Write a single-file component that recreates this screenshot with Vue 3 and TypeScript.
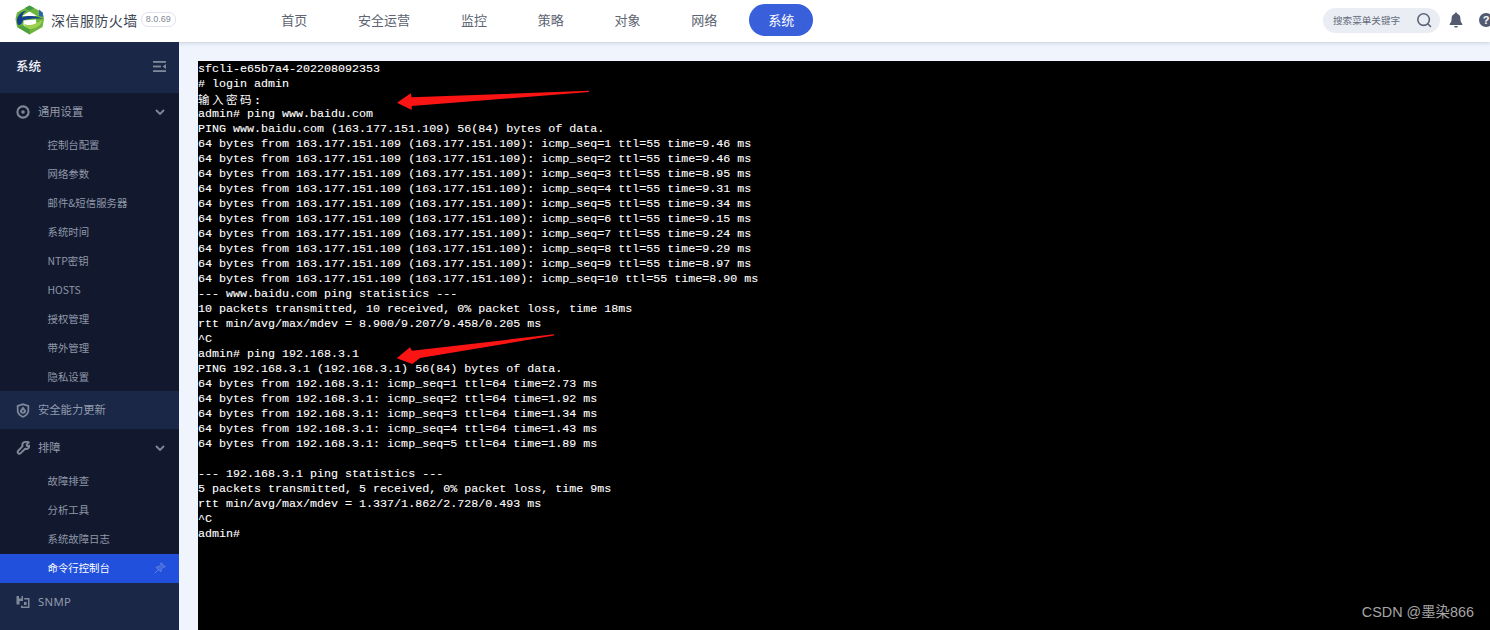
<script setup lang="ts">
const navItems = ['首页', '安全运营', '监控', '策略', '对象', '网络', '系统']
const generalItems = ['控制台配置', '网络参数', '邮件&短信服务器', '系统时间', 'NTP密钥', 'HOSTS', '授权管理', '带外管理', '隐私设置']
const troubleItems = ['故障排查', '分析工具', '系统故障日志']

const pingBaidu = ['9.46', '9.46', '8.95', '9.31', '9.34', '9.15', '9.24', '9.29', '8.97', '8.90'].map(
  (t, i) => `64 bytes from 163.177.151.109 (163.177.151.109): icmp_seq=${i + 1} ttl=55 time=${t} ms`,
)
const pingGateway = ['2.73', '1.92', '1.34', '1.43', '1.89'].map(
  (t, i) => `64 bytes from 192.168.3.1: icmp_seq=${i + 1} ttl=64 time=${t} ms`,
)
const linesAfter = [
  'admin# ping www.baidu.com',
  'PING www.baidu.com (163.177.151.109) 56(84) bytes of data.',
  ...pingBaidu,
  '--- www.baidu.com ping statistics ---',
  '10 packets transmitted, 10 received, 0% packet loss, time 18ms',
  'rtt min/avg/max/mdev = 8.900/9.207/9.458/0.205 ms',
  '^C',
  'admin# ping 192.168.3.1',
  'PING 192.168.3.1 (192.168.3.1) 56(84) bytes of data.',
  ...pingGateway,
  ' ',
  '--- 192.168.3.1 ping statistics ---',
  '5 packets transmitted, 5 received, 0% packet loss, time 9ms',
  'rtt min/avg/max/mdev = 1.337/1.862/2.728/0.493 ms',
  '^C',
  'admin#',
]
</script>

<template>
  <div class="page">
    <header class="topbar">
      <div class="brand">
        <svg class="logo" viewBox="0 0 30 30" width="30" height="30">
          <path d="M14.5 0.5 L27.5 7.5 L29 14 L27.5 22 L14.5 29.5 L2 22 L0.5 14 L2 7.5 Z" fill="#6db53e" />
          <path d="M14.5 0.5 L19 3 L14.5 6 L10 3 Z" fill="#3f9a4a" />
          <path d="M14.5 6.5 L22 11 L7 11 Z" fill="#ffffff" />
          <path d="M3 20 C0 14 4 6.5 12 5.5 C8.5 7.5 7 10 7 12.5 C11 10.5 20 10 28.5 14 C22 13 14 13.5 8 15.5 C7.5 17.5 6 20.5 3 20 Z" fill="#153f8e" />
          <path d="M24 4.5 L27.5 7.5 L28.5 12 L24 11 Z" fill="#2a64ad" />
          <path d="M8.5 15.5 L21 14.5 L21.5 19.5 L14.5 24 L8.5 20 Z" fill="#ffffff" />
          <path d="M9 19 C14 21.5 21 19.5 27.5 14.5 C27 20 21 24 15 24 C12 23.5 10 21.5 9 19 Z" fill="#9ed04f" />
          <path d="M14.5 24 L15 29.5 L2.5 22 L6 20.5 Z" fill="#4fa03f" />
        </svg>
        <span class="brand-name">深信服防火墙</span>
        <span class="version">8.0.69</span>
      </div>
      <nav class="nav">
        <a v-for="item in navItems" :key="item" class="nav-item" :class="{ active: item === '系统' }">{{ item }}</a>
      </nav>
      <div class="tools">
        <div class="search">
          <span class="search-text">搜索菜单关键字</span>
          <svg viewBox="0 0 16 16" width="16" height="16" fill="none" stroke="#5b6478" stroke-width="1.6">
            <circle cx="7.6" cy="7.6" r="5.8" />
            <path d="M12 12 L14.5 14.5" stroke-linecap="round" />
          </svg>
        </div>
        <svg class="bell" viewBox="0 0 14 16" width="14" height="16" fill="#525b70">
          <path d="M7 0.5 C7.8 0.5 8.2 1 8.2 1.8 C10.4 2.4 11.4 4.2 11.4 6.6 C11.4 9.2 12 10.6 13.3 12 L13.3 12.9 L0.7 12.9 L0.7 12 C2 10.6 2.6 9.2 2.6 6.6 C2.6 4.2 3.6 2.4 5.8 1.8 C5.8 1 6.2 0.5 7 0.5 Z" />
          <path d="M5.2 13.9 L8.8 13.9 C8.8 15 8 15.6 7 15.6 C6 15.6 5.2 15 5.2 13.9 Z" />
        </svg>
        <span class="help">?</span>
      </div>
    </header>

    <div class="body">
      <aside class="sidebar">
        <div class="side-head">
          <span>系统</span>
          <svg viewBox="0 0 13 11" width="13" height="11" fill="#7f8899">
            <rect x="0" y="0" width="13" height="1.8" />
            <rect x="0" y="4.6" width="8" height="1.8" />
            <rect x="0" y="9.2" width="13" height="1.8" />
            <path d="M13 3 L13 8 L9.6 5.5 Z" />
          </svg>
        </div>

        <div class="group">
          <div class="group-title">
            <svg class="g-icon" viewBox="0 0 14 14" width="14" height="14" fill="none" stroke="#7f8899">
              <circle cx="7" cy="7" r="5.6" stroke-width="2.1" />
              <circle cx="7" cy="7" r="1.8" fill="#7f8899" stroke="none" />
            </svg>
            <span class="g-label">通用设置</span>
            <svg class="chevron" viewBox="0 0 10 6" width="10" height="6" fill="none" stroke="#7f8899" stroke-width="1.8">
              <path d="M1 1 L5 5 L9 1" />
            </svg>
          </div>
          <a v-for="item in generalItems" :key="item" class="sub-item">{{ item }}</a>
        </div>

        <div class="group-title light">
          <svg class="g-icon" viewBox="0 0 14 15" width="14" height="15" fill="#7f8899">
            <path fill-rule="evenodd" d="M7 0.3 L13.2 2.2 L13.2 7.6 C13.2 11 10.4 13.6 7 14.8 C3.6 13.6 0.8 11 0.8 7.6 L0.8 2.2 Z M7 2.2 L2.5 3.4 L2.5 7.6 C2.5 9.8 4.6 12 7 13 C9.4 12 11.5 9.8 11.5 7.6 L11.5 3.4 Z" />
            <path d="M7 3.6 L10.2 7.8 C10.2 9.8 8.6 10.8 7 10.8 C5.4 10.8 3.8 9.8 3.8 7.8 Z M6.4 7 L6.4 9.2 L7.6 9.2 L7.6 7 Z" fill-rule="evenodd" />
          </svg>
          <span class="g-label">安全能力更新</span>
        </div>

        <div class="group">
          <div class="group-title">
            <svg class="g-icon" viewBox="0 0 14 14" width="14" height="14" fill="none" stroke="#7f8899" stroke-width="1.9">
              <path d="M8.3 1.2 C10 0.6 12 1 12.8 1.4 L10.6 3.7 L11 5 L12.4 5.3 L13.2 4.6 C13.5 6.6 11.8 8.4 9.2 7.8 L4.4 12.4 C3 13.6 0.8 11.6 2 10 L6.6 5.2 C6 3.6 6.8 1.8 8.3 1.2 Z" stroke-linejoin="round" />
            </svg>
            <span class="g-label">排障</span>
            <svg class="chevron" viewBox="0 0 10 6" width="10" height="6" fill="none" stroke="#7f8899" stroke-width="1.8">
              <path d="M1 1 L5 5 L9 1" />
            </svg>
          </div>
          <a v-for="item in troubleItems" :key="item" class="sub-item">{{ item }}</a>
          <a class="sub-item active">
            命令行控制台
            <svg class="pin" viewBox="0 0 12 12" width="12" height="12" fill="none" stroke="#5f80e6" stroke-width="1">
              <path d="M7.2 0.8 L11.2 4.8 L10.3 5.4 L9.4 5 L7.2 7.2 L7.4 9 L6.6 9.8 L2.2 5.4 L3 4.6 L4.8 4.8 L7 2.6 L6.6 1.6 Z" fill="#4168dc" />
              <path d="M4.2 7.8 L0.8 11.2" />
            </svg>
          </a>
        </div>

        <div class="group-title light grow">
          <svg class="g-icon" viewBox="0 0 14 14" width="14" height="14" fill="#7f8899">
            <path d="M0.5 1 H3 V3.5 H5.5 V1 H7 V6 H3.5 V9.5 H0.5 Z" />
            <path d="M8.2 3 H13.5 V13 H5 V10.8 H6.5 V11.5 H12 V4.5 H8.2 Z" />
            <rect x="8" y="7" width="2.6" height="3" />
          </svg>
          <span class="g-label latin">SNMP</span>
        </div>
      </aside>

      <main class="content">
        <section class="terminal">
          <div class="line">sfcli-e65b7a4-202208092353</div>
          <div class="line"># login admin</div>
          <div class="line cjk">输入密码<span class="colon">:</span></div>
          <div v-for="(line, i) in linesAfter" :key="i" class="line">{{ line }}</div>

          <svg class="arrows" viewBox="0 0 420 320" width="420" height="320">
            <polygon points="199,41.7 212.7,32.3 213.7,36.3 391,29.7 391,31 213.7,45 213.7,49" fill="#fb1414" />
            <polygon points="198.7,297.3 212,286.3 214,289.7 356,273.3 356,274.5 222,297 214.3,303" fill="#fb1414" />
          </svg>
          <span class="watermark">CSDN @墨染866</span>
        </section>
      </main>
    </div>
  </div>
</template>

<style scoped>
.page {
  width: 1490px;
  height: 630px;
  overflow: hidden;
  display: flex;
  flex-direction: column;
  background: #f0f4fc;
  font-family: "Noto Sans CJK SC", "Noto Sans", sans-serif;
}
.topbar {
  height: 42px;
  flex: none;
  box-sizing: border-box;
  padding-bottom: 2px;
  display: flex;
  align-items: center;
  background: #fff;
  box-shadow: 0 1px 4px rgba(60, 70, 100, 0.22);
  position: relative;
  z-index: 2;
}
.brand {
  width: 262.3px;
  flex: none;
  display: flex;
  align-items: center;
  padding-left: 15px;
  box-sizing: border-box;
}
.logo {
  flex: none;
  margin-top: -1px;
}
.brand-name {
  margin-left: 6px;
  font-size: 14px;
  letter-spacing: 0.45px;
  color: #3f4757;
  white-space: nowrap;
  margin-top: -1px;
}
.version {
  margin-left: 3px;
  height: 13px;
  line-height: 12px;
  padding: 0 4px;
  border: 1px solid #dfe2ec;
  border-radius: 7px;
  font-size: 9px;
  color: #828998;
  font-family: "Liberation Sans", sans-serif;
  white-space: nowrap;
  margin-top: -1px;
}
.nav {
  display: flex;
  gap: 12.8px;
  align-items: center;
}
.nav-item {
  height: 32px;
  line-height: 32px;
  padding: 0 19px;
  border-radius: 16px;
  font-size: 13px;
  color: #5d6472;
  white-space: nowrap;
}
.nav-item.active {
  background: #3a5fdb;
  color: #fff;
}
.tools {
  margin-left: auto;
  display: flex;
  align-items: center;
  margin-right: -3px;
}
.search {
  width: 117px;
  height: 25px;
  box-sizing: border-box;
  padding: 0 8px 0 10px;
  border-radius: 13px;
  background: #eaedf4;
  display: flex;
  align-items: center;
  justify-content: space-between;
}
.search-text {
  font-size: 9.6px;
  color: #666d7c;
  white-space: nowrap;
}
.bell {
  margin-left: 9px;
}
.help {
  margin-left: 16px;
  width: 14px;
  height: 14px;
  border-radius: 50%;
  background: #525b70;
  color: #fff;
  font-size: 11px;
  font-weight: 700;
  line-height: 14px;
  text-align: center;
  font-family: "Liberation Sans", sans-serif;
}
.body {
  flex: 1;
  min-height: 0;
  display: flex;
}
.sidebar {
  width: 179px;
  flex: none;
  display: flex;
  flex-direction: column;
  background: #12192e;
}
.side-head {
  height: 51px;
  flex: none;
  box-sizing: border-box;
  padding: 0 13px 4px 16px;
  display: flex;
  align-items: center;
  justify-content: space-between;
  background: #1a2747;
  color: #f2f4f8;
  font-size: 12.5px;
  font-weight: 500;
}
.side-head svg {
  margin-top: 2px;
}
.group-title {
  height: 38px;
  flex: none;
  box-sizing: border-box;
  padding-left: 16px;
  display: flex;
  align-items: center;
}
.group-title.light {
  background: #1a2747;
}
.group-title.grow {
  flex: 1;
  height: auto;
  padding-bottom: 8px;
}
.g-icon {
  flex: none;
  width: 14px;
}
.g-label {
  margin-left: 8px;
  font-size: 11.3px;
  color: #929aab;
  position: relative;
  top: -1px;
}
.g-label.latin {
  font-family: "Noto Sans", sans-serif;
  letter-spacing: 0.3px;
}
.chevron {
  margin-left: auto;
  margin-right: 14px;
}
.sub-item {
  height: 28.9px;
  box-sizing: border-box;
  padding: 0 0 1px 47.5px;
  display: flex;
  align-items: center;
  font-size: 10.4px;
  color: #8f97a8;
}
.sub-item.active {
  background: #2150dc;
  color: #fff;
  position: relative;
}
.pin {
  position: absolute;
  right: 13px;
  top: 8px;
}
.content {
  flex: 1;
  min-width: 0;
  padding: 19px 0 0 19px;
}
.terminal {
  position: relative;
  height: 100%;
  box-sizing: border-box;
  padding-top: 1px;
  background: #000;
  color: #fff;
  font-family: "Liberation Mono", monospace;
  font-size: 11.68px;
  line-height: 15px;
  -webkit-text-stroke: 0.1px #fff;
  overflow: hidden;
}
.line {
  height: 15px;
  white-space: pre;
}
.line.cjk {
  font-family: "Noto Sans CJK SC", sans-serif;
  font-size: 11.5px;
  letter-spacing: 2.5px;
  line-height: 15px;
  -webkit-text-stroke: 0;
}
.colon {
  font-family: "Liberation Mono", monospace;
  font-size: 11.68px;
  font-weight: 700;
  letter-spacing: 0;
}
.arrows {
  position: absolute;
  left: 0;
  top: 0;
  overflow: visible;
}
.watermark {
  position: absolute;
  right: 16px;
  bottom: 9px;
  font-family: "Liberation Sans", "Noto Sans CJK SC", sans-serif;
  font-size: 14.4px;
  line-height: 18px;
  color: #a6a6a6;
  -webkit-text-stroke: 0;
}
</style>

<style>
html,
body {
  margin: 0;
  overflow: hidden;
}
</style>
